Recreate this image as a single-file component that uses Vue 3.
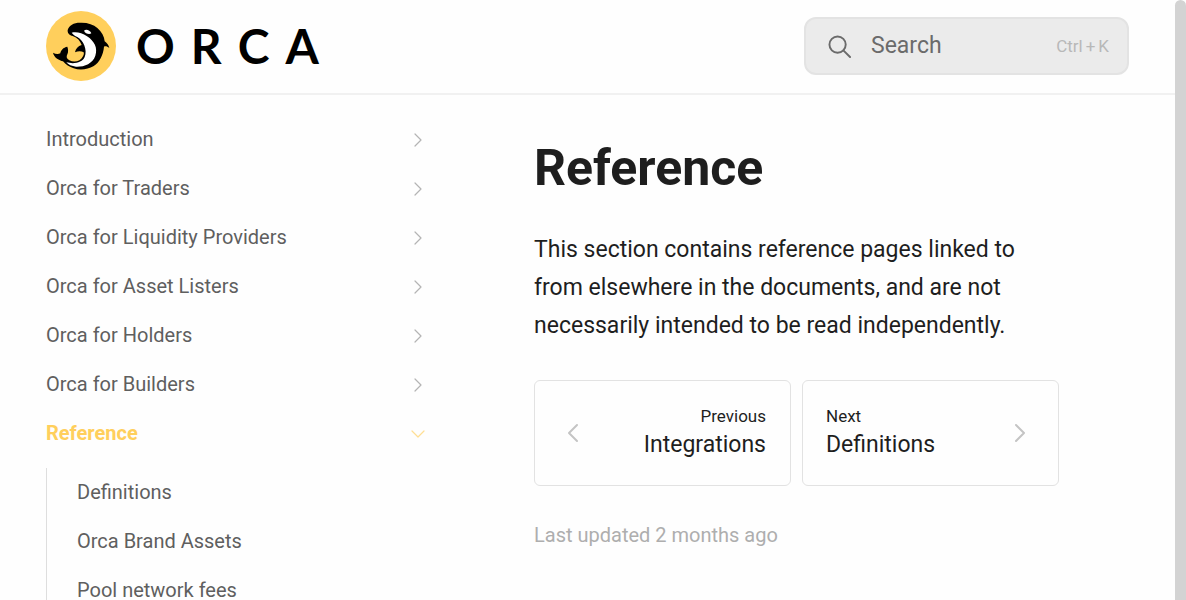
<script setup>
const sections = [
  'Introduction',
  'Orca for Traders',
  'Orca for Liquidity Providers',
  'Orca for Asset Listers',
  'Orca for Holders',
  'Orca for Builders',
]
const pages = ['Definitions', 'Orca Brand Assets', 'Pool network fees']
const wordmark = ['O', 'R', 'C', 'A']
const shortcut = ['Ctrl', '+', 'K']
</script>

<template>
  <div class="shell">
    <div class="page">
      <header class="header">
        <a class="brand" href="#" aria-label="Orca home">
          <svg class="badge" viewBox="18 19 210 210" aria-hidden="true">
            <circle cx="123" cy="124" r="105" fill="#ffcf5c" />
            <path
              d="M83 76C87 62 101 54 120 54C142 53 160 59 172 70C185 81 193 95 194 110C200 114 206 121 208 130C202 125 196 124 192 126C190 150 178 174 160 185C145 194 120 198 101 191C88 187 77 180 69 170C58 166 43 161 39 144C46 148 54 149 61 146C62 137 70 128 82 126C85 134 85 143 82 149C78 156 80 163 88 167C103 175 122 170 129 155C132 149 132 146 131 143C124 139 114 139 105 143C107 132 114 124 125 121C121 109 112 99 98 94C89 92 82 86 83 76Z"
              fill="#000"
            />
            <path
              d="M95 84C108 80 126 84 141 95C163 109 174 130 166 153C158 177 132 187 108 186C96 185 84 180 79 173C103 179 127 174 134 157C143 136 130 106 112 97C105 93 99 90 95 84Z"
              fill="#fff"
            />
            <path d="M132 78C138 73 150 76 154 86C147 90 136 87 132 78Z" fill="#fff" />
          </svg>
          <span class="wordmark">
            <span v-for="letter in wordmark" :key="letter">{{ letter }}</span>
          </span>
        </a>
        <label class="search">
          <svg class="lens" viewBox="0 0 24 24" aria-hidden="true">
            <circle cx="10" cy="10" r="8.500" />
            <path d="M16 16L23 23" />
          </svg>
          <input type="search" placeholder="Search" aria-label="Search" />
          <span class="shortcut">
            <span v-for="key in shortcut" :key="key">{{ key }}</span>
          </span>
        </label>
      </header>

      <div class="body">
        <nav class="sidebar" aria-label="Documentation">
          <a v-for="name in sections" :key="name" class="item" href="#">
            {{ name }}
            <svg class="chevron" viewBox="0 0 16 16" aria-hidden="true"><path d="M5 2L11 8L5 14" /></svg>
          </a>
          <a class="item active" href="#">
            Reference
            <svg class="chevron" viewBox="0 0 16 16" aria-hidden="true"><path d="M2 5L8 11L14 5" /></svg>
          </a>
          <div class="children">
            <a v-for="name in pages" :key="name" class="item" href="#">{{ name }}</a>
          </div>
        </nav>

        <main class="content">
          <h1>Reference</h1>
          <p class="intro">
            This section contains reference pages linked to from elsewhere in the documents, and are
            not necessarily intended to be read independently.
          </p>
          <div class="pager">
            <a class="card previous" href="#">
              <svg class="arrow" viewBox="0 0 20 20" aria-hidden="true"><path d="M14 2L6 10L14 18" /></svg>
              <span class="target"><small>Previous</small><span>Integrations</span></span>
            </a>
            <a class="card" href="#">
              <span class="target"><small>Next</small><span>Definitions</span></span>
              <svg class="arrow" viewBox="0 0 20 20" aria-hidden="true"><path d="M6 2L14 10L6 18" /></svg>
            </a>
          </div>
          <p class="updated">Last updated 2 months ago</p>
        </main>
      </div>
    </div>
    <div class="scrollbar" aria-hidden="true"></div>
  </div>
</template>

<style>
body {
  overflow: hidden;
}
</style>

<style scoped>
* {
  box-sizing: border-box;
}
.shell {
  display: flex;
  height: 100vh;
  overflow: hidden;
  background: #fefefe;
  color: #1e1e1e;
  font-family: Roboto, "Liberation Sans", sans-serif;
}
.page {
  flex: 1;
  min-width: 0;
}
.scrollbar {
  width: 11px;
  background: #d3d3d3;
  border-radius: 6px 6px 0 0;
}
a {
  color: inherit;
  text-decoration: none;
}
svg {
  flex: none;
  fill: none;
  stroke-linecap: round;
  stroke-linejoin: round;
}
.header {
  display: flex;
  align-items: center;
  justify-content: space-between;
  height: 95px;
  padding: 0 46px 1px;
  border-bottom: 2px solid #f1f1f1;
}
.brand {
  display: flex;
  align-items: center;
  gap: 20px;
}
.badge {
  width: 70px;
  height: 70px;
}
.wordmark {
  display: flex;
  gap: 16px;
  color: #000;
  font: 700 48px/56px Lato, sans-serif;
}
.search {
  display: flex;
  align-items: center;
  width: 325px;
  height: 58px;
  padding: 0 18px 0 22px;
  border: 2px solid #e3e3e3;
  border-radius: 12px;
  background: #ebebeb;
}
.lens {
  width: 23px;
  height: 23px;
  stroke: #6b6b6b;
  stroke-width: 2;
}
.search input {
  flex: 1;
  min-width: 0;
  margin: 0 0 0 20px;
  padding: 0;
  border: 0;
  outline: 0;
  background: none;
  color: #6b6b6b;
  font: 400 23px/32px Roboto, sans-serif;
}
.search input::placeholder {
  color: #6b6b6b;
  opacity: 1;
}
.shortcut {
  display: flex;
  gap: 3px;
  color: #b8b8b8;
  font-size: 17px;
}
.body {
  display: flex;
  gap: 104px;
  padding: 0 116px 0 46px;
}
.sidebar {
  width: 384px;
  padding-top: 20px;
  color: #5f5f5f;
  font-size: 20px;
}
.item {
  display: flex;
  align-items: center;
  justify-content: space-between;
  padding-right: 4px;
  line-height: 49px;
}
.chevron {
  width: 16px;
  height: 16px;
  stroke: #b4b4b4;
  stroke-width: 1.2;
}
.active {
  color: #ffcf5c;
  font-weight: 700;
}
.active .chevron {
  stroke: #ffdf94;
}
.children {
  margin-top: 10px;
  padding-left: 30px;
  border-left: 1px solid #dedede;
}
.content {
  flex: 1;
  min-width: 0;
  padding-top: 40px;
}
h1 {
  margin: 0;
  font-size: 50px;
  font-weight: 700;
  line-height: 66px;
}
.intro {
  margin: 30px 0 35px;
  font-size: 23px;
  line-height: 38px;
}
.pager {
  display: grid;
  grid-template-columns: 1fr 1fr;
  gap: 11px;
}
.card {
  display: flex;
  align-items: center;
  justify-content: space-between;
  height: 106px;
  padding: 0 28px 0 23px;
  border: 1px solid #e2e2e2;
  border-radius: 6px;
}
.previous {
  padding: 0 24px 0 28px;
  text-align: right;
}
.arrow {
  width: 20px;
  height: 20px;
  stroke: #c4c4c4;
  stroke-width: 2;
}
.target {
  display: flex;
  flex-direction: column;
  padding-bottom: 3px;
  font-size: 23px;
  line-height: 32px;
}
.target small {
  font-size: 17px;
  line-height: 26px;
}
.updated {
  margin: 34px 0 0;
  color: #aeaeae;
  font-size: 20px;
  line-height: 30px;
}
</style>
